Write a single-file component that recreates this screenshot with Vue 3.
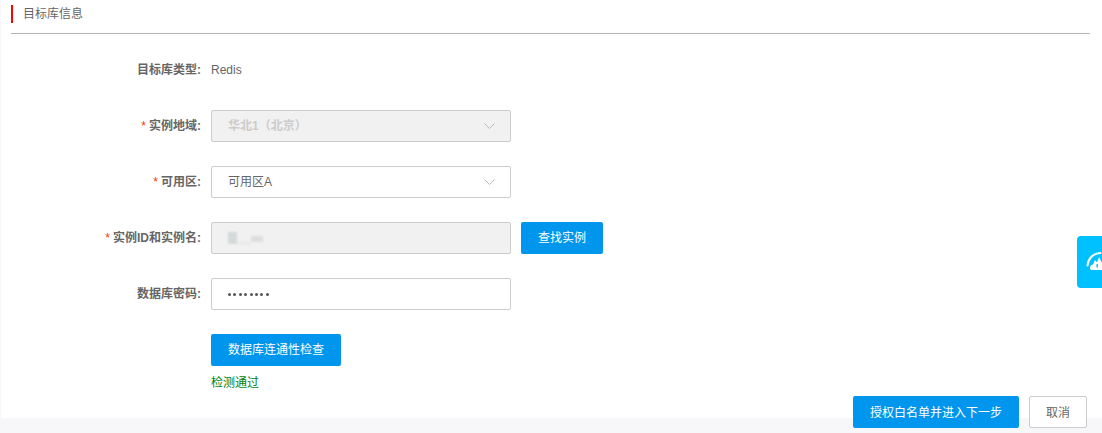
<script setup>
const chevron = 'M.5.5l5 5 5-5'
</script>

<template>
  <div class="page">
    <section class="panel">
      <header class="title"><span class="title-text">目标库信息</span></header>
      <div class="rule"></div>
      <form class="form" @submit.prevent>
        <div class="row row-plain">
          <label class="label">目标库类型:</label>
          <span class="value">Redis</span>
        </div>
        <div class="row">
          <label class="label"><i class="req">*</i>实例地域:</label>
          <div class="field disabled select">
            <span class="muted">华北1（北京）</span>
            <svg class="chev" width="11" height="6" viewBox="0 0 11 6"><path :d="chevron" /></svg>
          </div>
        </div>
        <div class="row">
          <label class="label"><i class="req">*</i>可用区:</label>
          <div class="field select">
            <span>可用区A</span>
            <svg class="chev" width="11" height="6" viewBox="0 0 11 6"><path :d="chevron" /></svg>
          </div>
        </div>
        <div class="row">
          <label class="label"><i class="req">*</i>实例ID和实例名:</label>
          <div class="field disabled">
            <span class="smudge"><b class="s1"></b><b class="s2"></b><b class="s3"></b></span>
          </div>
          <button class="btn primary find" type="button">查找实例</button>
        </div>
        <div class="row">
          <label class="label">数据库密码:</label>
          <div class="field"><span class="dots"><b v-for="n in 8" :key="n"></b></span></div>
        </div>
        <div class="row check">
          <span class="label"></span>
          <button class="btn primary" type="button">数据库连通性检查</button>
        </div>
        <div class="row pass">
          <span class="label"></span>
          <span class="ok">检测通过</span>
        </div>
      </form>
    </section>
    <footer class="footer">
      <button class="btn primary wide" type="button">授权白名单并进入下一步</button>
      <button class="btn cancel" type="button">取消</button>
    </footer>
    <aside class="float-tab">
      <svg width="25" height="24" viewBox="0 0 25 24">
        <path d="M1.500 15.500C2 9 6.500 3.500 14.500 3" fill="none" stroke="#fff" stroke-width="2" stroke-linecap="round" />
        <path d="M4 18c0-2 1.500-3.500 3-3.500l2-4.500 2 2.500 2-5.500 2.500 5 3.500-.5L25 14v6H6.500C5 20 4 19.500 4 18z" fill="#fff" />
        <path d="M10.500 14h1.500v3.500h-1.500z" fill="#00c1ff" />
      </svg>
    </aside>
  </div>
</template>

<style>
html, body { margin: 0; background: #f7f7f9; }
</style>

<style scoped>
.page {
  position: relative;
  width: 1102px;
  height: 433px;
  overflow: hidden;
  background: #f7f7f9;
  font-family: "Liberation Sans", "Noto Sans CJK SC", sans-serif;
  font-size: 12px;
  color: #666;
}
.panel {
  box-sizing: border-box;
  height: 418px;
  margin-left: 1px;
  padding: 5px 12px 0 10px;
  background: #fff;
}
.title {
  height: 18px;
  line-height: 18px;
  border-left: 2px solid #f00;
  padding-left: 10px;
  color: #666;
}
.rule {
  height: 1px;
  margin-top: 10px;
  background: #b4b4b4;
}
.form {
  display: flex;
  flex-direction: column;
  margin-top: 21px;
}
.row {
  display: flex;
  align-items: center;
  margin-bottom: 24px;
  line-height: 16px;
}
.row-plain { height: 30px; margin-bottom: 25px; }
.label {
  width: 200px;
  padding-right: 10px;
  box-sizing: border-box;
  text-align: right;
  font-weight: 700;
  color: #666;
  flex: none;
}
.req {
  font-style: normal;
  font-weight: 400;
  color: #f30;
  margin-right: 3px;
}
.value { color: #666; }
.field {
  box-sizing: border-box;
  display: flex;
  align-items: center;
  justify-content: space-between;
  width: 300px;
  height: 32px;
  padding: 0 16px;
  background: #fff;
  border: 1px solid #ccc;
  border-radius: 2px;
}
.disabled { background: #f1f1f1; }
.muted { color: #ccc; font-weight: 700; }
.chev { flex: none; margin-right: -1px; }
.chev path { fill: none; stroke: #bbb; stroke-width: 1; }
.smudge { display: flex; align-items: center; filter: blur(1px); }
.smudge b { display: block; height: 12px; }
.s1 { width: 9px; background: #d4d9d9; }
.s2 { width: 14px; height: 4px !important; margin-top: 9px; background: #ececec; }
.s3 { width: 12px; height: 6px !important; margin-top: 2px; background: #dedede; }
.dots { display: flex; gap: 2.400px; }
.dots b { display: block; width: 3px; height: 3px; border-radius: 50%; background: #555; }
.btn {
  box-sizing: border-box;
  height: 32px;
  padding: 0;
  border-radius: 2px;
  border: 1px solid transparent;
  font: inherit;
  cursor: pointer;
}
.primary { background: #0096ed; color: #fff; }
.find { width: 82px; margin-left: 10px; padding-bottom: 1px; }
.check { margin-bottom: 9px; }
.check .btn { width: 130px; }
.pass { margin-bottom: 0; }
.ok { color: #007f12; }
.footer {
  display: flex;
  justify-content: flex-end;
  gap: 10px;
  margin-top: -22px;
  padding-right: 15px;
}
.wide { width: 166px; padding-bottom: 2px; }
.cancel {
  width: 58px;
  padding-bottom: 2px;
  background: #fff;
  border-color: #ccc;
  color: #666;
}
.float-tab {
  position: absolute;
  left: 1077px;
  top: 236px;
  width: 30px;
  height: 52px;
  display: flex;
  align-items: center;
  padding-left: 9px;
  box-sizing: border-box;
  background: #00c1ff;
  border-radius: 4px;
}
.float-tab svg { flex: none; }
</style>
